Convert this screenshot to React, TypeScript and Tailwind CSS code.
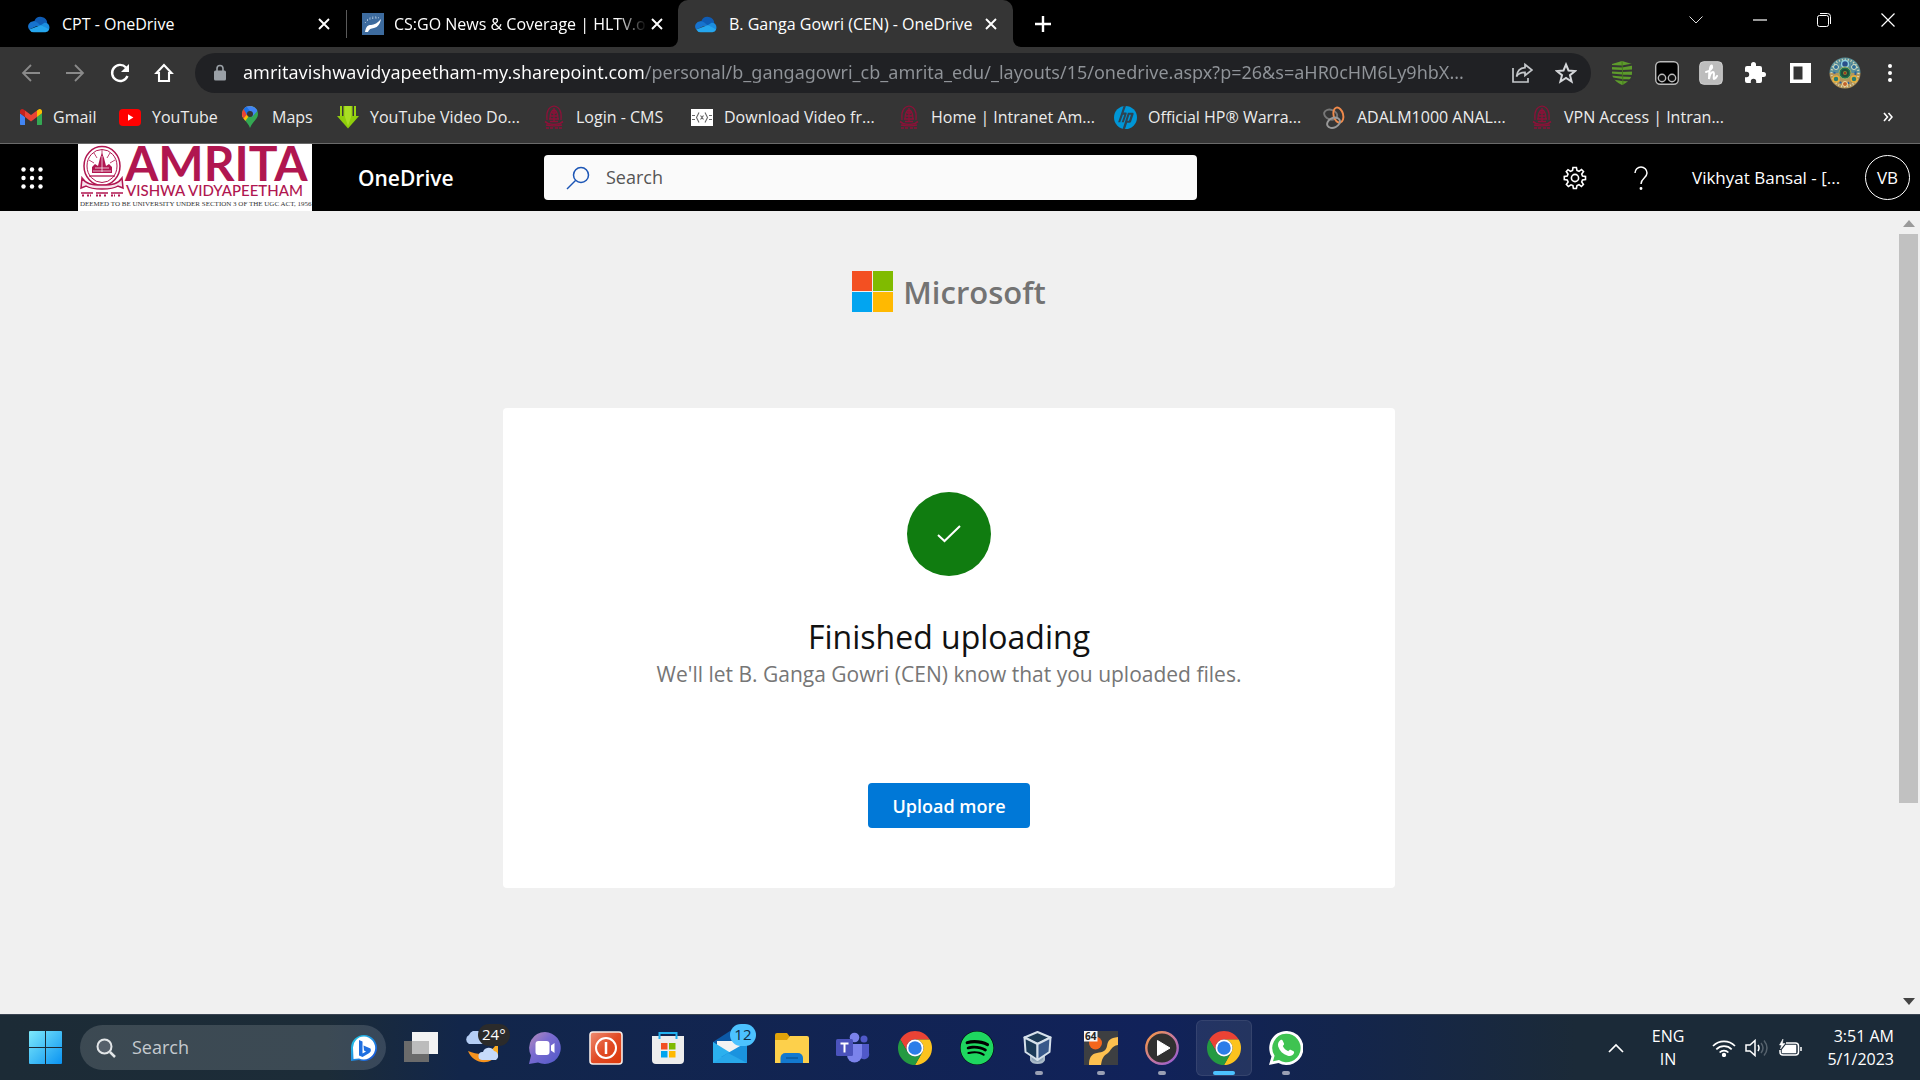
import type { ReactNode } from "react";
import { FaSpotify } from "react-icons/fa";

const CloudIcon = () => (
  <svg viewBox="0 0 24 24" className="size-[22px] shrink-0" aria-hidden="true">
    <path d="M9 10.5 14.8 14 21 11.4A7.3 7.3 0 0 0 7 8.6L5.5 9.6z" fill="#0f5cb4" />
    <path d="M6.2 8.9A5.7 5.7 0 0 0 1.3 18l7.9-3.6 5.6-.6-5-3.6a6 6 0 0 0-3.6-1.3z" fill="#1673ce" />
    <path d="M14.3 13.2 18 10.6a5 5 0 0 1 1.1 0c3 .4 5 3.6 4.1 6.5l-1.4 2.2z" fill="#1b8ee0" />
    <path d="M1.3 18a5.6 5.6 0 0 0 5 3H19a4.9 4.9 0 0 0 4.1-3l-8.8-5z" fill="#25a6ee" />
  </svg>
);

const HltvIcon = () => (
  <svg viewBox="0 0 22 22" className="size-[22px] shrink-0" aria-hidden="true">
    <path d="M0 0h22v22H0z" fill="#3d6b9e" />
    <path d="M3 19c1-6 3-7 6-7 3-.3 7-2 10-6-1 5-3 8-7 9-3 .5-5 1-6 4z" fill="#fff" />
    <path d="M3 10c2-3 6-5 12-5M5 7c3-3 8-4 12-2" fill="none" stroke="#c9d9ea" strokeDasharray="1 2" />
  </svg>
);

const CloseIcon = () => (
  <svg viewBox="0 0 14 14" className="size-3.5" aria-hidden="true">
    <path d="m2 2 10 10M12 2 2 12" stroke="#fff" strokeWidth="1.9" />
  </svg>
);

const AmritaIcon = () => (
  <svg viewBox="0 0 20 24" className="h-6 w-[22px] shrink-0" fill="none" stroke="#8c1138" aria-hidden="true">
    <path d="M3 15c-1-8 1-13 7-14 6 1 8 6 7 14" strokeWidth="1.2" />
    <path d="M6 14c0-5 1-8 4-9.500 3 1.500 4 4.500 4 9.500M10 3v14M5 14h10M7 11h6M8 8h4M6 16.500h8" strokeWidth="1.400" />
    <path d="M1 16.500l3 2c3 1 9 1 12 0l3-2M2 20c4 1 12 1 16 0" strokeWidth="1.600" />
    <path d="M2 23h3m1 0h3m2 0h3m1 0h3" strokeWidth="1.500" />
  </svg>
);

const GmailIcon = () => (
  <svg viewBox="52 42 88 66" className="w-[22px] shrink-0" aria-hidden="true">
    <path fill="#4285f4" d="M58 108h14V74L52 59v43c0 3.320 2.690 6 6 6" />
    <path fill="#34a853" d="M120 108h14c3.320 0 6-2.690 6-6V59l-20 15" />
    <path fill="#fbbc04" d="M120 48v26l20-15v-8c0-7.420-8.470-11.650-14.400-7.200" />
    <path fill="#ea4335" d="M72 74V48l24 18 24-18v26L96 92" />
    <path fill="#c5221f" d="M52 51v8l20 15V48l-5.600-4.200c-5.940-4.450-14.400-.220-14.400 7.200" />
  </svg>
);

const YouTubeIcon = () => (
  <svg viewBox="0 0 22 17" className="w-[22px] shrink-0" aria-hidden="true">
    <rect width="22" height="17" rx="4" fill="#f00" />
    <path d="M9 5.300v6.400l5.400-3.200z" fill="#fff" />
  </svg>
);

const MapsIcon = () => (
  <svg viewBox="0 0 22 24" className="h-6 w-[22px] shrink-0" aria-hidden="true">
    <clipPath id="pin">
      <path d="M11 1C6.500 1 3 4.500 3 9c0 5.500 5.500 7 8 14 2.500-7 8-8.500 8-14 0-4.500-3.500-8-8-8z" />
    </clipPath>
    <g clipPath="url(#pin)">
      <path d="M0 0h22v24H0z" fill="#34a853" />
      <path d="M0 22V11L11 0l5 3L4 19z" fill="#fbbc04" />
      <path d="M0 0h8l3 6-7 8H0z" fill="#ea4335" />
      <path d="M5 3 9 0h13v2l-9 10-2-6z" fill="#4285f4" />
      <path d="M4 3 7 1l4 5-3 4z" fill="#1a73e8" />
    </g>
    <circle cx="11" cy="9" r="3" fill="#353535" />
  </svg>
);

const DownloadIcon = () => (
  <svg viewBox="0 0 22 24" className="h-6 w-[22px] shrink-0" aria-hidden="true">
    <path d="M3 1h2v10H3zM6.500 1h9v10h-9zM17 1h2v10h-2z" fill="#9ad412" />
    <path d="M0 11h22L11 23.500z" fill="#8fce0c" />
    <path d="M8 1h6v11l-3 9-3-9z" fill="#a9df24" />
  </svg>
);

const CodeIcon = () => (
  <svg viewBox="0 0 22 17" className="w-[22px] shrink-0" aria-hidden="true">
    <path d="M0 0h22v17H0z" fill="#fff" />
    <path
      d="M8 3.500 5.500 8.500 8 13.500M14 3.500l2.500 5-2.500 5M9.500 6.500l3 4M12.500 6.500l-3 4M1 6.500h3M1 10.500h3M18 6.500h3M18 10.500h3"
      fill="none"
      stroke="#666"
      strokeWidth="1.100"
    />
  </svg>
);

const HpIcon = () => (
  <svg viewBox="0 0 24 24" className="size-[23px] shrink-0" aria-hidden="true">
    <circle cx="12" cy="12" r="12" fill="#0096d6" />
    <path
      d="M10 0 4.300 17h2.200l2.800-8h1.500l-2.800 8h2.200l3-8.600c.3-1-.2-1.500-1-1.500H10L12.500 0zM14.500 7 9 24h2.500l2.200-6.600h2.500c.8 0 1.300-.3 1.600-1l2.600-7.800c.3-1-.2-1.600-1-1.600zm1.600 2h1.600l-2.100 6.500H14z"
      fill="#2d4352"
    />
  </svg>
);

const RingsIcon = () => (
  <svg viewBox="0 0 24 24" className="size-[23px] shrink-0" fill="none" strokeWidth="2" aria-hidden="true">
    <ellipse cx="8" cy="9" rx="7" ry="5" stroke="#777" transform="rotate(20 8 9)" />
    <ellipse cx="16" cy="9.500" rx="5" ry="8" stroke="#f08a4b" transform="rotate(-15 16 9.500)" />
    <ellipse cx="11" cy="17.500" rx="7" ry="5" stroke="#999" transform="rotate(-25 11 17.500)" />
  </svg>
);

const ChromeIcon = () => (
  <svg viewBox="0 0 48 48" className="size-[34px]" aria-hidden="true">
    <path d="M24 12h20.780A24 24 0 0 0 3.220 12L13.600 30A12 12 0 0 1 24 12Z" fill="#ea4335" />
    <path d="M34.390 30 24 48A24 24 0 0 0 44.780 12H24a12 12 0 0 1 10.390 18Z" fill="#fcc31e" />
    <path d="M13.610 30 3.220 12A24 24 0 0 0 24 48l10.390-18a12 12 0 0 1-20.780 0Z" fill="#249a41" />
    <circle cx="24" cy="24" r="12" fill="#fff" />
    <circle cx="24" cy="24" r="9.500" fill="#2b7de9" />
  </svg>
);

const windowTabs = [
  { title: "CPT - OneDrive", icon: <CloudIcon />, active: false },
  { title: "CS:GO News & Coverage | HLTV.org", icon: <HltvIcon />, active: false },
  { title: "B. Ganga Gowri (CEN) - OneDrive", icon: <CloudIcon />, active: true },
];

const bookmarks = [
  { label: "Gmail", icon: <GmailIcon />, slot: "w-[99px]" },
  { label: "YouTube", icon: <YouTubeIcon />, slot: "w-[120px]" },
  { label: "Maps", icon: <MapsIcon />, slot: "w-[98px]" },
  { label: "YouTube Video Do...", icon: <DownloadIcon />, slot: "w-[206px]" },
  { label: "Login - CMS", icon: <AmritaIcon />, slot: "w-[148px]" },
  { label: "Download Video fr...", icon: <CodeIcon />, slot: "w-[207px]" },
  { label: "Home | Intranet Am...", icon: <AmritaIcon />, slot: "w-[216px]" },
  { label: "Official HP® Warra...", icon: <HpIcon />, slot: "w-[209px]" },
  { label: "ADALM1000 ANAL...", icon: <RingsIcon />, slot: "w-[208px]" },
  { label: "VPN Access | Intran...", icon: <AmritaIcon />, slot: "w-[200px]" },
];

function IconButton({ label, className = "", children }: { label: string; className?: string; children: ReactNode }) {
  return (
    <button type="button" aria-label={label} className={`flex shrink-0 items-center justify-center ${className}`}>
      {children}
    </button>
  );
}

function TabStrip() {
  return (
    <div className="flex h-[47px] bg-black text-white">
      <div className="flex pl-[6px]">
        {windowTabs.map((tab, i) => (
          <div key={tab.title} className="flex">
            {i === 1 && <div className="mt-[10px] h-7 w-px bg-[#5a5a5a]" />}
            {tab.active && (
              <svg viewBox="0 0 8 8" className="size-2 self-end" aria-hidden="true">
                <path d="M8 0v8H0a8 8 0 0 0 8-8z" fill="#353535" />
              </svg>
            )}
            <div
              className={
                tab.active
                  ? "flex w-[335px] items-center rounded-t-[10px] bg-[#353535] pr-3 pl-[17px]"
                  : i === 0
                    ? "flex w-[340px] items-center pr-3 pl-[22px]"
                    : "flex w-[323px] items-center pr-[3px] pl-[15px]"
              }
            >
              {tab.icon}
              <button
                type="button"
                className={
                  i === 1
                    ? "ml-[10px] min-w-0 flex-1 overflow-hidden text-left text-[16px] whitespace-nowrap [mask-image:linear-gradient(to_right,#000_88%,transparent)]"
                    : "ml-3 min-w-0 flex-1 overflow-hidden text-left text-[16px] whitespace-nowrap"
                }
              >
                {tab.title}
              </button>
              <IconButton label={`Close ${tab.title}`} className="size-5">
                <CloseIcon />
              </IconButton>
            </div>
            {tab.active && (
              <svg viewBox="0 0 8 8" className="size-2 self-end" aria-hidden="true">
                <path d="M0 0v8h8a8 8 0 0 1-8-8z" fill="#353535" />
              </svg>
            )}
          </div>
        ))}
      </div>
      <IconButton label="New tab" className="w-11">
        <svg viewBox="0 0 18 18" className="size-[18px]" aria-hidden="true">
          <path d="M9 1v16M1 9h16" stroke="#fff" strokeWidth="2.400" />
        </svg>
      </IconButton>
      <div className="ml-auto flex h-10" role="group" aria-label="Window">
        <IconButton label="Search tabs" className="w-16">
          <svg viewBox="0 0 14 8" className="w-3.5" aria-hidden="true">
            <path d="m.5.5 6.500 6.500L13.500.5" fill="none" stroke="#ddd" />
          </svg>
        </IconButton>
        <IconButton label="Minimize" className="w-16">
          <svg viewBox="0 0 14 2" className="w-3.5" aria-hidden="true">
            <path d="M0 1h14" stroke="#fff" strokeWidth="1.200" />
          </svg>
        </IconButton>
        <IconButton label="Restore" className="w-16">
          <svg viewBox="0 0 14 14" className="w-3.5" fill="none" stroke="#fff" aria-hidden="true">
            <rect x=".5" y="2.500" width="11" height="11" rx="2" />
            <path d="M3 .5h7.500a3 3 0 0 1 3 3V11" />
          </svg>
        </IconButton>
        <IconButton label="Close" className="w-16">
          <svg viewBox="0 0 14 14" className="w-3.5" aria-hidden="true">
            <path d="m.5.5 13 13m0-13-13 13" stroke="#fff" strokeWidth="1.200" />
          </svg>
        </IconButton>
      </div>
    </div>
  );
}

function Toolbar() {
  return (
    <div className="flex h-[51px] items-center bg-[#353535] pr-[8px] pl-[9px]">
      <IconButton label="Back" className="w-11">
        <svg viewBox="0 0 20 20" className="size-5" fill="none" stroke="#8a8a8a" strokeWidth="1.800" aria-hidden="true">
          <path d="M19 10H2M10 2l-8 8 8 8" />
        </svg>
      </IconButton>
      <IconButton label="Forward" className="w-11">
        <svg viewBox="0 0 20 20" className="size-5" fill="none" stroke="#8a8a8a" strokeWidth="1.800" aria-hidden="true">
          <path d="M1 10h17m-8-8 8 8-8 8" />
        </svg>
      </IconButton>
      <IconButton label="Reload" className="w-[46px]">
        <svg viewBox="0 0 20 20" className="size-5" aria-hidden="true">
          <path d="M17.500 13A8 8 0 1 1 16 4.500" fill="none" stroke="#fff" strokeWidth="2.400" />
          <path d="M19 1v8h-8z" fill="#fff" />
        </svg>
      </IconButton>
      <IconButton label="Home" className="w-[42px]">
        <svg viewBox="0 0 20 20" className="size-5" aria-hidden="true">
          <path d="M10 2 2.500 10H5v8h10v-8h2.500z" fill="none" stroke="#fff" strokeWidth="2.100" />
        </svg>
      </IconButton>
      <div className="ml-[10px] flex h-10 min-w-0 flex-1 items-center rounded-full bg-[#202124] pr-[3px] pl-[18px]">
        <svg viewBox="0 0 14 18" className="w-3.5 shrink-0" aria-hidden="true">
          <rect x="1" y="6.500" width="12" height="10" rx="1.500" fill="#9aa0a6" />
          <path d="M4 7V4.500a3 3 0 0 1 6 0V7" fill="none" stroke="#9aa0a6" strokeWidth="1.600" />
        </svg>
        <input
          type="text"
          aria-label="Address"
          readOnly
          value="amritavishwavidyapeetham-my.sharepoint.com/personal/b_gangagowri_cb_amrita_edu/_layouts/15/onedrive.aspx?p=26&s=aHR0cHM6Ly9hbX..."
          className="ml-4 min-w-0 flex-1 bg-[linear-gradient(to_right,#ffffff_401px,#909499_401px)] bg-clip-text font-['Noto_Sans'] text-[18px] text-transparent outline-none"
        />
        <IconButton label="Share" className="w-11">
          <svg viewBox="0 0 22 22" className="size-[22px]" fill="none" stroke="#c4c7ca" strokeWidth="1.700" aria-hidden="true">
            <path d="M2 6v14h15v-4" />
            <path d="M14 2.500 21 8l-7 5.500v-3.200c-4 0-7 1.200-8.500 4.200C6 9.500 9 6 14 5.600z" />
          </svg>
        </IconButton>
        <IconButton label="Bookmark this page" className="w-11">
          <svg viewBox="0 0 22 22" className="size-[22px]" fill="none" stroke="#d5d7da" strokeWidth="2" aria-hidden="true">
            <path d="m11 2.500 2.500 6 6.500.5-5 4.200 1.600 6.300L11 16l-5.600 3.500L7 13.200 2 9l6.500-.5z" />
          </svg>
        </IconButton>
      </div>
      <div className="ml-2 flex items-center">
        <IconButton label="Shield extension" className="w-[45px]">
          <svg viewBox="0 0 22 24" className="h-6" aria-hidden="true">
            <path d="M11 0 1 3v9c0 6 5 9.500 10 12 5-2.500 10-6 10-12V3z" fill="#5d9b2c" />
            <path d="m0 5 11 .5 11-2M0 9.500l11 .5 11-.5M0 13.500l11 1 11 .5M2 17.500l9 1.500 9 .5" fill="none" stroke="#353535" strokeWidth="1.800" />
            <path d="m11 0 1 24" stroke="#447a1c" />
          </svg>
        </IconButton>
        <IconButton label="Tampermonkey" className="w-[45px]">
          <svg viewBox="0 0 24 24" className="size-6" stroke="#bbb" aria-hidden="true">
            <rect x=".7" y=".7" width="22.600" height="22.600" rx="4.500" fill="#000" strokeWidth="1.400" />
            <circle cx="7" cy="17" r="3.700" fill="#111" strokeWidth="1.400" />
            <circle cx="17" cy="17" r="3.700" fill="#111" strokeWidth="1.400" />
          </svg>
        </IconButton>
        <IconButton label="Honey" className="w-[44px]">
          <svg viewBox="0 0 24 24" className="size-6" aria-hidden="true">
            <rect x=".7" y=".7" width="22.600" height="22.600" rx="4" fill="#bdbdbd" stroke="#d0d0d0" />
            <path
              d="M7 11c4-1 7-4 6-6s-3 3-3 13c1-5 2-7 4-7s0 7 1 7 2-1 3-3"
              fill="none"
              stroke="#fff"
              strokeWidth="2"
              strokeLinecap="round"
            />
          </svg>
        </IconButton>
        <IconButton label="Extensions" className="w-[44px]">
          <svg viewBox="0 0 24 24" className="size-6" aria-hidden="true">
            <path
              d="M20.500 11H19V7a2 2 0 0 0-2-2h-4V3.500a2.500 2.500 0 0 0-5 0V5H4a2 2 0 0 0-2 2v3.800h1.500a2.700 2.700 0 0 1 0 5.400H2V20a2 2 0 0 0 2 2h3.800v-1.500a2.700 2.700 0 0 1 5.400 0V22H17a2 2 0 0 0 2-2v-4h1.500a2.500 2.500 0 0 0 0-5z"
              fill="#fff"
            />
          </svg>
        </IconButton>
        <IconButton label="Side panel" className="w-[46px]">
          <svg viewBox="0 0 21 20" className="h-5" aria-hidden="true">
            <path d="M0 0h21v20H0zM3.500 3.500v13h9v-13z" fill="#fff" fillRule="evenodd" />
          </svg>
        </IconButton>
        <IconButton label="Profile" className="w-[44px]">
          <svg viewBox="0 0 32 32" className="size-8" fill="none" aria-hidden="true">
            <clipPath id="avatar">
              <circle cx="16" cy="16" r="15.500" />
            </clipPath>
            <g clipPath="url(#avatar)">
              <path d="M0 0h32v16H0z" fill="#5a9099" />
              <path d="M0 16h32v16H0z" fill="#b3955a" />
              <circle cx="16" cy="16" r="13.500" stroke="#dcd8b8" strokeWidth="2" strokeDasharray="1 2" />
              <circle cx="16" cy="16" r="10.500" stroke="#2b5f9e" strokeWidth="2" strokeDasharray="2 2" />
              <circle cx="16" cy="7" r="3.500" stroke="#8ed0e0" strokeWidth="1.500" fill="#2a4f8c" />
              <circle cx="7" cy="10" r="2.500" stroke="#d8e3c0" fill="#2f6d9a" />
              <circle cx="25" cy="10" r="2.500" stroke="#d8e3c0" fill="#2f6d9a" />
              <circle cx="7" cy="22" r="3" stroke="#e9b23c" strokeWidth="1.500" fill="#2c7d70" />
              <circle cx="25" cy="22" r="3" stroke="#e9b23c" strokeWidth="1.500" fill="#2c7d70" />
              <circle cx="16" cy="27" r="2.500" stroke="#f0dca0" fill="#c0622c" />
              <circle cx="16" cy="16" r="6" fill="#1f7450" stroke="#a9b263" />
              <circle cx="16" cy="16" r="3" fill="#8a8b3a" stroke="#234a3a" strokeWidth="2" />
              <circle cx="16" cy="16" r="1.200" fill="#a13a20" />
            </g>
          </svg>
        </IconButton>
        <IconButton label="Menu" className="w-[45px]">
          <svg viewBox="0 0 4 20" className="h-5" fill="#fff" aria-hidden="true">
            <circle cx="2" cy="3" r="2" />
            <circle cx="2" cy="10" r="2" />
            <circle cx="2" cy="17" r="2" />
          </svg>
        </IconButton>
      </div>
    </div>
  );
}

function BookmarksBar() {
  return (
    <nav aria-label="Bookmarks" className="flex h-[46px] border-b border-[#6a6a6a] bg-[#353535] pt-[7px] pr-[20px] pl-5">
      {bookmarks.map((b) => (
        <div key={b.label} className={`flex h-6 shrink-0 items-center ${b.slot}`}>
          <a href="#" className="flex items-center gap-[11px] text-[16px] whitespace-nowrap text-[#ececec]">
            {b.icon}
            {b.label}
          </a>
        </div>
      ))}
      <IconButton label="More bookmarks" className="ml-auto h-6 w-6">
        <svg viewBox="0 0 10 10" className="size-2.5" fill="none" stroke="#fff" strokeWidth="1.600" aria-hidden="true">
          <path d="m1 1 3.500 4L1 9M5.500 1 9 5 5.500 9" />
        </svg>
      </IconButton>
    </nav>
  );
}

function AmritaLogo() {
  return (
    <a href="#" aria-label="Amrita Vishwa Vidyapeetham" className="block h-[67px] w-[234px] shrink-0 bg-white">
      <svg viewBox="0 0 234 67" className="h-full w-full overflow-visible">
        <g fill="none" stroke="#b01650">
          <ellipse cx="24" cy="22" rx="18" ry="19.500" strokeWidth="1.500" />
          <ellipse cx="24" cy="22" rx="15" ry="16.500" />
          <path d="M24 6v5m-8-2 3 5m13-5-3 5M11 16l5 3m21-3-5 3" strokeWidth=".8" />
          <path d="M11 32h26" strokeWidth="1.300" />
          <path d="M4 34c4 6 9 7 20 7s16-1 20-7l1 10-5-2c-6 4-26 4-32 0l-5 2z" strokeWidth="1.500" fill="#f7e3ec" />
          <path d="M3 49h12m3 0h12m3 0h12" strokeWidth="1.300" />
          <path d="M4 51.500h3m2 0h4m5 0h5m3 0h3m4 0h4m3 0h2" strokeWidth="2" strokeDasharray="2 1" />
        </g>
        <path d="M14 29v-6l3-3 3 2 2-8 2-5 2 5 2 8 3-2 3 3v6z" fill="#b01650" />
        <path d="M17 24h14M15 27h18M24 12v16" stroke="#fff" strokeWidth=".7" />
        <text x="47" y="37" fill="#b01650" className="font-['Lato'] text-[48px] font-bold">
          AMRITA
        </text>
        <text x="48" y="52" fill="#b01650" className="font-['Lato'] text-[15px] font-medium">
          VISHWA VIDYAPEETHAM
        </text>
        <text x="2" y="62" fill="#333" className="font-['Liberation_Serif'] text-[7px]">
          DEEMED TO BE UNIVERSITY UNDER SECTION 3 OF THE UGC ACT, 1956
        </text>
      </svg>
    </a>
  );
}

function SuiteBar() {
  return (
    <header className="flex h-[67px] items-center bg-black pr-[10px] text-white">
      <IconButton label="App launcher" className="w-16">
        <svg viewBox="0 0 22 22" className="size-[22px]" fill="#fff" aria-hidden="true">
          {[2.5, 11, 19.5].map((y) => [2.5, 11, 19.5].map((x) => <circle key={`${x}-${y}`} cx={x} cy={y} r="2.200" />))}
        </svg>
      </IconButton>
      <div className="pl-[14px]">
        <AmritaLogo />
      </div>
      <a href="#" className="ml-[46px] w-[186px] pt-0.5 text-[21px] font-semibold">
        OneDrive
      </a>
      <label className="flex h-[45px] w-[653px] items-center rounded bg-[#fafafa] pl-[22px]">
        <svg viewBox="0 0 24 24" className="size-6" fill="none" stroke="#1b55b5" strokeWidth="1.500" aria-hidden="true">
          <circle cx="15" cy="9" r="7.500" />
          <path d="m9.500 14.500-8.500 8.500" />
        </svg>
        <input
          type="search"
          placeholder="Search"
          aria-label="Search"
          className="ml-4 min-w-0 flex-1 bg-transparent text-[18px] text-[#333] outline-none placeholder:text-[#555]"
        />
      </label>
      <div className="ml-auto flex items-center">
        <IconButton label="Settings" className="w-[66px]">
          <svg viewBox="0 0 24 24" className="size-6" fill="none" stroke="#fff" strokeWidth="1.600" aria-hidden="true">
            <circle cx="12" cy="12" r="3.600" />
            <path d="m10 1.500-.5 3-2 .9L5 3.700 3.300 5.500 5 8l-.8 2-2.900.5v3l2.900.5.9 2-1.700 2.500 2 2L8 18.800l1.900.8.500 2.900h3l.6-3 2-.8 2.400 1.800 2-2L18.700 16l.8-2 3-.5v-3l-3-.5-.8-2L20.500 5.500l-2-2L16 5.300l-2-.8-.6-3z" />
          </svg>
        </IconButton>
        <IconButton label="Help" className="w-[66px]">
          <svg viewBox="0 0 14 24" className="h-6" fill="none" stroke="#fff" strokeWidth="1.500" aria-hidden="true">
            <path d="M1 7a6 6 0 0 1 12 0c0 5-6 5-6 11" />
            <circle cx="7" cy="22.500" r=".7" fill="#fff" />
          </svg>
        </IconButton>
        <button type="button" className="ml-[18px] flex items-center">
          <span className="w-[173px] text-left text-[17px] whitespace-nowrap">Vikhyat Bansal - [...</span>
          <span className="flex size-[45px] items-center justify-center rounded-full border border-white text-[17px]">VB</span>
        </button>
      </div>
    </header>
  );
}

function UploadPage() {
  return (
    <div className="flex flex-1 bg-[#f0f0f0]">
      <main className="flex flex-1 flex-col items-center pt-[60px]">
        <div className="flex items-center gap-[10px] text-[31px] leading-[40px] font-semibold text-[#737373]">
          <svg viewBox="0 0 41 41" className="size-[41px]" aria-hidden="true">
            <path d="M0 0h20v20H0z" fill="#f35022" />
            <path d="M21 0h20v20H21z" fill="#80bb00" />
            <path d="M0 21h20v20H0z" fill="#02a5f0" />
            <path d="M21 21h20v20H21z" fill="#ffb901" />
          </svg>
          Microsoft
        </div>
        <section className="mt-24 flex w-full max-w-[892px] flex-col items-center rounded bg-white pt-[84px] pb-[60px]">
          <span className="flex size-[84px] items-center justify-center rounded-full bg-[#107c10]">
            <svg viewBox="0 0 24 18" className="w-6" aria-hidden="true">
              <path d="m1 10 6.500 6L23 1" fill="none" stroke="#fff" strokeWidth="2" />
            </svg>
          </span>
          <h1 className="mt-10 text-[32px] leading-[42px] text-[#111]">Finished uploading</h1>
          <p className="mt-0.5 text-[21px] leading-[28px] text-[#767676]">We'll let B. Ganga Gowri (CEN) know that you uploaded files.</p>
          <button type="button" className="mt-[95px] h-[45px] rounded bg-[#0078d7] px-6 pt-0.5 text-[18px] font-semibold text-white">
            Upload more
          </button>
        </section>
      </main>
      <div className="flex w-[22px] flex-col items-center justify-between py-[9px] pr-px" aria-hidden="true">
        <svg viewBox="0 0 12 7" className="w-3">
          <path d="M0 7h12L6 0z" fill="#9a9a9a" />
        </svg>
        <div className="mt-[7px] mb-auto h-[569px] w-[19px] bg-[#c1c1c1]" />
        <svg viewBox="0 0 12 7" className="w-3">
          <path d="M0 0h12L6 7z" fill="#444" />
        </svg>
      </div>
    </div>
  );
}

const taskbarApps: { name: string; icon: ReactNode; running?: boolean; current?: boolean }[] = [
  {
    name: "Task view",
    icon: (
      <svg viewBox="0 0 34 32" className="w-[34px]">
        <path d="M0 10h25v21H0z" fill="#6b6b6b" />
        <path d="M8 1h26v22H8z" fill="#f3f3f3" />
        <path d="M8 10h17v13H8z" fill="#bcbcbc" />
      </svg>
    ),
  },
  {
    name: "Weather, 24°",
    icon: (
      <span className="relative block">
        <svg viewBox="0 0 36 34" className="w-9">
          <path d="M4 13a5 5 0 0 1 0-9 7 7 0 0 1 13 0 5 5 0 0 1 2 9z" fill="#b4cdf5" />
          <path d="M32 14c-8 10-16 11-29 6 5 13 23 16 30 2z" fill="#f5921e" />
          <path d="M31 13c-2 5-6 7-12 9l14 4V13z" fill="#fbad24" />
          <path d="M17 29a4 4 0 0 1 1-8 6 6 0 0 1 11-1 5 5 0 0 1 2 9z" fill="#c6dafa" />
        </svg>
        <span className="absolute -top-[7px] left-[13px] flex h-[22px] w-8 items-center justify-center rounded-full bg-[#2b2b2b] text-[15px] text-white">
          24°
        </span>
      </span>
    ),
  },
  {
    name: "Chat",
    icon: (
      <svg viewBox="0 0 34 34" className="w-[34px]">
        <linearGradient id="chat" x2="1" y2="1">
          <stop stopColor="#b98fb9" />
          <stop offset=".4" stopColor="#7b6bd0" />
          <stop offset="1" stopColor="#5059c9" />
        </linearGradient>
        <path d="M17 1a16 16 0 1 1-7 30.500L1 33l2-8.500A16 16 0 0 1 17 1z" fill="url(#chat)" />
        <rect x="7.500" y="10" width="14" height="14" rx="3" fill="#fff" />
        <path d="M23 14.500 26.500 12v10L23 19.500z" fill="#fff" />
      </svg>
    ),
  },
  {
    name: "Power",
    icon: (
      <svg viewBox="0 0 34 34" className="w-[34px]">
        <linearGradient id="power" x2="1" y2="1">
          <stop stopColor="#ee8d72" />
          <stop offset=".5" stopColor="#e14b26" />
          <stop offset="1" stopColor="#dc3809" />
        </linearGradient>
        <rect x="1" y="1" width="32" height="32" rx="3" fill="url(#power)" stroke="#f5ece8" strokeWidth="1.600" />
        <circle cx="17" cy="17" r="10" fill="none" stroke="#fff" strokeWidth="2" />
        <path d="M17 11v12" stroke="#fff" strokeWidth="2.500" />
      </svg>
    ),
  },
  {
    name: "Microsoft Store",
    icon: (
      <svg viewBox="0 0 34 34" className="w-[34px]">
        <path d="M8.500 8V2h17v6" fill="none" stroke="#22b2ef" strokeWidth="2" />
        <path d="M1 5h32v24a4 4 0 0 1-4 4H5a4 4 0 0 1-4-4z" fill="#ededed" />
        <path d="M8.500 5v3m17-3v3" stroke="#22b2ef" strokeWidth="2" />
        <path d="M10 12h6.500v6.500H10z" fill="#f25022" />
        <path d="M18 12h6.500v6.500H18z" fill="#7fba00" />
        <path d="M10 20h6.500v6.500H10z" fill="#00a4ef" />
        <path d="M18 20h6.500v6.500H18z" fill="#ffb900" />
      </svg>
    ),
  },
  {
    name: "Mail, 12 unread",
    icon: (
      <span className="relative block">
        <svg viewBox="0 0 34 34" className="w-[34px]">
          <path d="M0 11 17 0l17 11v21H0z" fill="#0c59a6" />
          <path d="M4 10h26v10L17 26 4 18z" fill="#f2f2f2" />
          <path d="m0 11 34 21H0z" fill="#2bb0ee" />
          <path d="M34 11 8 26l26 6z" fill="#1a93df" />
          <path d="m0 32 15-10 19 10z" fill="#28a8ea" />
        </svg>
        <span className="absolute -top-[7px] left-[17px] flex h-[22px] w-[26px] items-center justify-center rounded-full bg-[#4cc2ff] text-[15px] text-[#102c44]">
          12
        </span>
      </span>
    ),
  },
  {
    name: "File Explorer",
    icon: (
      <svg viewBox="0 0 34 34" className="w-[34px]">
        <path d="M0 4a2 2 0 0 1 2-2h10l3 4v8H0z" fill="#e0a30a" />
        <path d="M0 9h12l3-4h17a2 2 0 0 1 2 2v25H0z" fill="#fdd04b" />
        <path d="M5.500 32v-5a5 5 0 0 1 5-5H23a5 5 0 0 1 5 5v5z" fill="#1379cf" />
        <path d="M11 27h12" stroke="#0b5597" strokeWidth="1.300" />
      </svg>
    ),
  },
  {
    name: "Microsoft Teams",
    icon: (
      <svg viewBox="0 0 34 34" className="w-[34px]">
        <circle cx="28" cy="8" r="3.500" fill="#5059c9" />
        <path d="M22 13h11v9a5 5 0 0 1-9 4z" fill="#5059c9" />
        <circle cx="18.500" cy="6.500" r="4.800" fill="#7b83eb" />
        <path d="M11 13h15v11a7.500 7.500 0 0 1-15 0z" fill="#7b83eb" />
        <rect y="8" width="17" height="17" rx="1.500" fill="#4b53bc" />
        <path d="M4.500 12.500h8M8.500 12.500v9" stroke="#fff" strokeWidth="2" />
      </svg>
    ),
  },
  { name: "Google Chrome", icon: <ChromeIcon /> },
  {
    name: "Spotify",
    icon: (
      <span className="block rounded-full bg-black">
        <FaSpotify className="size-[34px] text-[#1ed760]" />
      </span>
    ),
  },
  {
    name: "VirtualBox",
    running: true,
    icon: (
      <svg viewBox="0 0 34 34" className="w-[34px]" stroke="#d5e0ea" strokeWidth="2" strokeLinejoin="round">
        <path d="M9 25v4c2 4 11 4 13 0v-4" fill="#8fa5b8" stroke="#a9b9c8" />
        <path d="m15.500 1 13 5.500-13 6.500-13-6.500z" fill="#1c3a57" />
        <path d="M2.500 6.500l13 6.500v16L3.500 21z" fill="#1b3a58" />
        <path d="M28.500 6.500l-13 6.500v16l12-8z" fill="#38598a" />
      </svg>
    ),
  },
  {
    name: "Video player, 64 bit",
    running: true,
    icon: (
      <svg viewBox="0 0 34 34" className="w-[34px]">
        <path d="M0 0h34v34H0z" fill="#3d3f42" />
        <circle cx="11.500" cy="12" r="6.500" fill="#f4661c" />
        <path d="M34 6c-8 1-10 3-11 9-1 5-4 6-10 7-6 1-8 5-8 12h12c1-6 2-9 7-12 3-2 3-7 10-8z" fill="#fdc04f" />
        <path d="M0 0h13.500v10.500H0z" fill="#f5f5f5" />
        <text x="1" y="9" fill="#222" className="text-[10px] font-bold">
          64
        </text>
      </svg>
    ),
  },
  {
    name: "Media Player",
    running: true,
    icon: (
      <svg viewBox="0 0 34 34" className="w-[34px]">
        <linearGradient id="media" x2="1" y2="1">
          <stop stopColor="#fb9a3c" />
          <stop offset=".5" stopColor="#c87a9b" />
          <stop offset="1" stopColor="#9259d6" />
        </linearGradient>
        <circle cx="17" cy="17" r="15.700" fill="#303030" stroke="url(#media)" strokeWidth="2.400" />
        <path d="M12.500 9.500v15L25 17z" fill="#fff" stroke="#fff" strokeLinejoin="round" />
      </svg>
    ),
  },
  { name: "Google Chrome, active window", running: true, current: true, icon: <ChromeIcon /> },
  {
    name: "WhatsApp",
    running: true,
    icon: (
      <svg viewBox="0 0 34 34" className="w-[34px]">
        <path d="M17 0a17 17 0 1 1-7.500 32L0 34l2.500-8.500A17 17 0 0 1 17 0z" fill="#fff" />
        <path d="M17 2.800a14.200 14.200 0 1 1-7 26.300L4 30.300l1.600-5.600A14.200 14.200 0 0 1 17 2.800z" fill="#3fc351" />
        <path
          d="M11.500 9c.8-.6 1.700-.4 2.100.4l1.400 3c.3.800-.2 1.500-1.200 2.500 1.200 2.500 3 4.200 5.500 5.300 1-1.200 1.500-1.700 2.300-1.400l2.900 1.500c.7.400.8 1.200.3 2.200-1 2-3.300 3-6 2.200C13.800 23.200 10.500 20 9.200 15.500 8.500 12.700 9.500 10.300 11.500 9z"
          fill="#fff"
        />
      </svg>
    ),
  },
];

function Taskbar() {
  return (
    <footer className="flex h-[66px] items-center border-t border-[#3a4452] bg-[linear-gradient(to_right,#1c2b36_0%,#1c2c38_17%,#12264a_24%,#11225a_60%,#13254c_70%,#1b2a38_82%)] pl-4 text-white">
      <IconButton label="Start" className="size-[58px]">
        <svg viewBox="0 0 33 33" className="size-[33px]" aria-hidden="true">
          <linearGradient id="start" x2="1" y2="1">
            <stop stopColor="#7eeafb" />
            <stop offset="1" stopColor="#0a93f2" />
          </linearGradient>
          <path d="M0 1a1 1 0 0 1 1-1h15v16H0zM17 0h15a1 1 0 0 1 1 1v15H17zM0 17h16v16H1a1 1 0 0 1-1-1zM17 17h16v15a1 1 0 0 1-1 1H17z" fill="url(#start)" />
        </svg>
      </IconButton>
      <label className="ml-[6px] flex h-[45px] w-[306px] shrink-0 items-center rounded-full bg-white/14 pr-2 pl-4">
        <svg viewBox="0 0 20 20" className="size-5" fill="none" stroke="#e3e6e8" strokeWidth="2" aria-hidden="true">
          <circle cx="8.500" cy="8.500" r="7" fill="#56606b" />
          <path d="m14 14 5 5" strokeWidth="2.500" />
        </svg>
        <input
          type="search"
          placeholder="Search"
          aria-label="Search the taskbar"
          className="ml-4 min-w-0 flex-1 bg-transparent text-[18px] outline-none placeholder:text-[#c5cacf]"
        />
        <svg viewBox="0 0 28 28" className="size-7" aria-hidden="true">
          <linearGradient id="bing" x2="1" y2="1">
            <stop stopColor="#23d3e8" />
            <stop offset="1" stopColor="#1b49d8" />
          </linearGradient>
          <path d="M14 1a13 13 0 1 1-5 25l-8 1V14A13 13 0 0 1 14 1z" fill="url(#bing)" />
          <path d="M14 2.500A11.500 11.500 0 1 1 9 24.500l-5.500.5L3 14A11 11 0 0 1 14 2.500z" fill="#fff" />
          <path d="m9 6 3.500 1.500v12L9 21.500zM13.500 11.500l7 3c1 2 0 4-2 5l-6 3.500-3.500-1.500 7-4-2-1z" fill="#1f6fe0" />
        </svg>
      </label>
      <div className="ml-[7px] flex w-[921px] shrink-0 justify-between">
        {taskbarApps.map((app) => (
          <button
            key={app.name}
            type="button"
            aria-label={app.name}
            className={
              app.current
                ? "flex h-14 w-14 flex-col items-center rounded-md border border-white/8 bg-white/8 pt-[10px]"
                : "flex h-14 w-14 flex-col items-center border border-transparent pt-[10px]"
            }
          >
            {app.icon}
            {app.running && <span className={app.current ? "mt-[6px] h-1 w-[22px] rounded-full bg-[#4cc2ff]" : "mt-[6px] h-1 w-2 rounded-full bg-[#9aa0b4]"} />}
          </button>
        ))}
      </div>
      <div className="ml-auto flex items-center pr-[26px]">
        <IconButton label="Show hidden icons" className="mr-[26px] w-5">
          <svg viewBox="0 0 16 10" className="w-4" fill="none" stroke="#fff" strokeWidth="1.700" aria-hidden="true">
            <path d="m1 9 7-7 7 7" />
          </svg>
        </IconButton>
        <button type="button" className="mr-7 text-center text-[16px] leading-[23px]">
          ENG
          <br />
          IN
        </button>
        <button type="button" aria-label="Network, volume and battery" className="mr-[25px] flex items-center gap-[9px]">
          <svg viewBox="0 0 24 18" className="w-6" fill="none" stroke="#fff" strokeWidth="1.700" aria-hidden="true">
            <path d="M1 7a15.500 15.500 0 0 1 22 0M4.300 10.300a11 11 0 0 1 15.400 0M7.600 13.500a6.300 6.300 0 0 1 8.800 0" />
            <circle cx="12" cy="16" r="1.300" fill="#fff" />
          </svg>
          <svg viewBox="0 0 24 18" className="w-6" fill="none" stroke="#fff" strokeWidth="1.500" aria-hidden="true">
            <path d="M1 6h4l5-4.500v15L5 12H1zM13 6q2 3 0 6" />
            <path d="M16 4q4 5 0 10M19 1.500q6 7.500 0 15" stroke="#56626d" />
          </svg>
          <svg viewBox="0 0 24 18" className="w-6" fill="none" stroke="#fff" strokeWidth="1.500" aria-hidden="true">
            <path d="M8 4h9.500a3 3 0 0 1 3 3v6a3 3 0 0 1-3 3H5a3 3 0 0 1-3-3v-2M23 8v4" />
            <path d="M8 6.500h9.500v7H4.500V11z" fill="#fff" />
            <path d="M5 0 1.500 6h2L2.500 10 7 4.500H4.500z" fill="#fff" strokeWidth=".5" />
          </svg>
        </button>
        <button type="button" className="text-right text-[16px] leading-[23px]">
          3:51 AM
          <br />
          5/1/2023
        </button>
      </div>
    </footer>
  );
}

export default function App() {
  return (
    <div className="flex min-h-screen flex-col overflow-hidden font-['Open_Sans','Noto_Sans',sans-serif]">
      <TabStrip />
      <Toolbar />
      <BookmarksBar />
      <SuiteBar />
      <UploadPage />
      <Taskbar />
    </div>
  );
}
